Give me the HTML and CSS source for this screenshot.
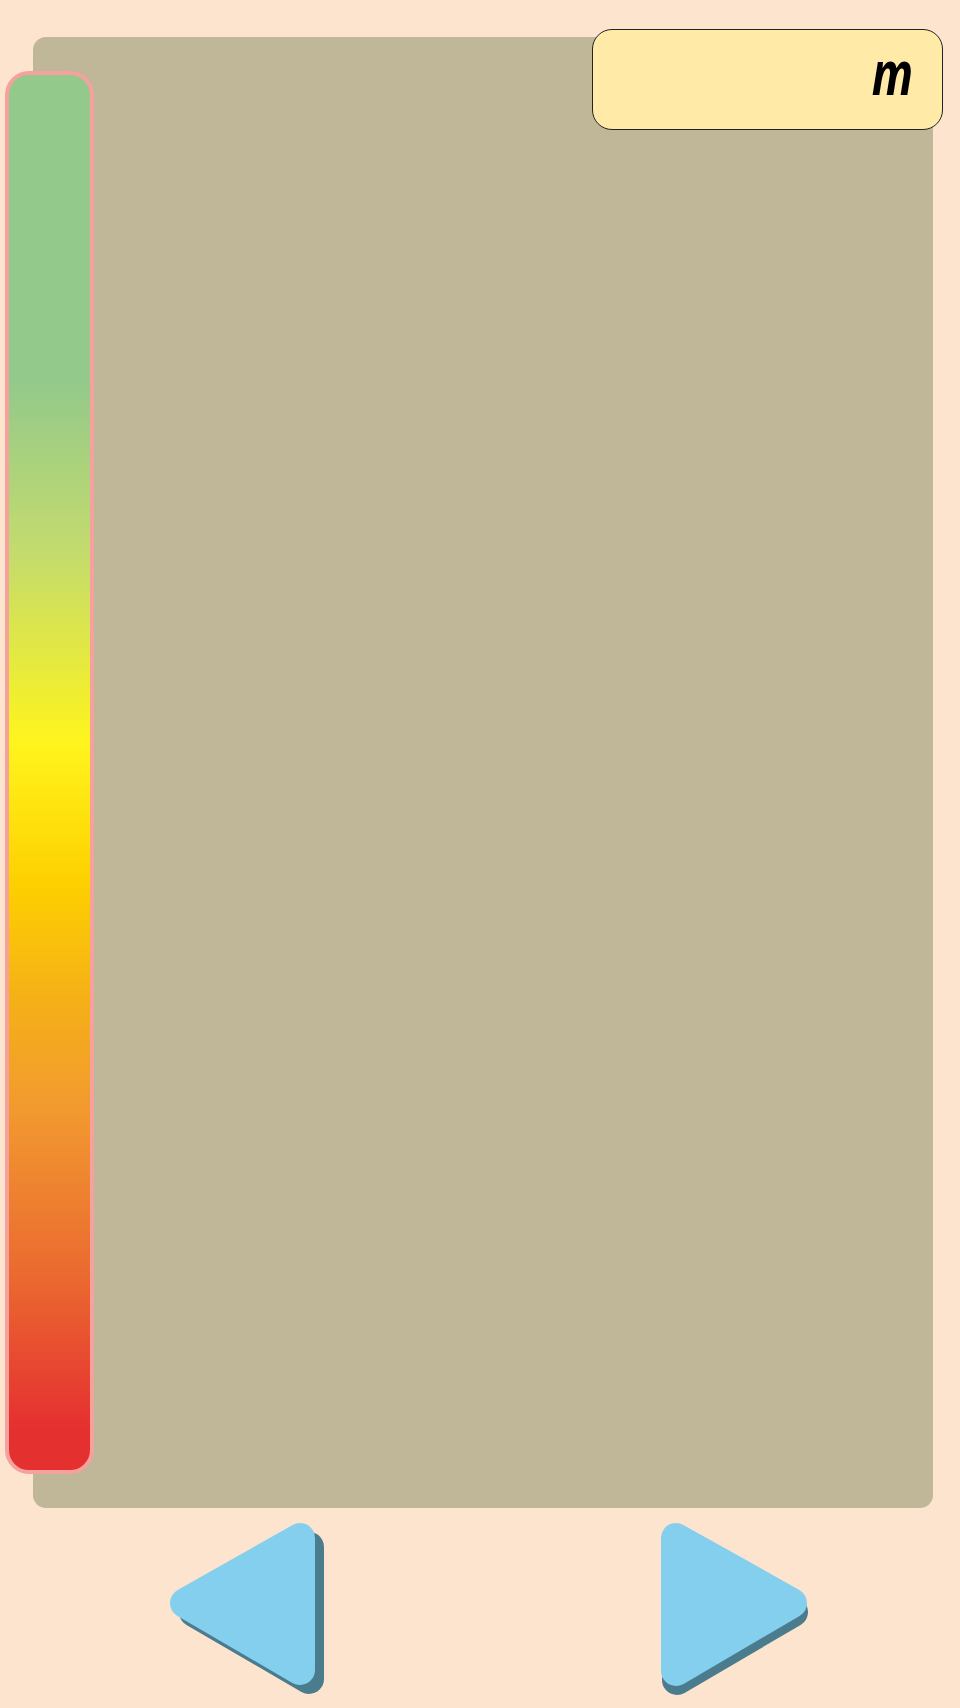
FILE: index.html
```html
<!DOCTYPE html>
<html lang="en">
<head>
    <meta charset="UTF-8">
    <meta name="viewport" content="width=device-width, initial-scale=1.0">
    <title>Gauge</title>
    <link rel="stylesheet" href="styles.css">
</head>
<body>
    <div class="stage">
        <div class="panel"></div>

        <div class="gauge"></div>

        <div class="readout">
            <span class="unit">m</span>
        </div>

        <div class="controls">
            <svg class="arrow" width="170" height="185" viewBox="0 0 170 185">
                <polygon class="arrow-shadow" points="34,97 149,32 149,164"/>
                <polygon class="arrow-face" points="25,88 140,23 140,155"/>
            </svg>
            <svg class="arrow" width="170" height="185" viewBox="0 0 170 185">
                <polygon class="arrow-shadow" points="27,32 27,165 143,97"/>
                <polygon class="arrow-face" points="26,23 26,156 142,88"/>
            </svg>
        </div>
    </div>
</body>
</html>
```

FILE: styles.css
```css
*{
    margin: 0;
    padding: 0;
    box-sizing: border-box;
}
body,html{
    background-color: #fce4cf;
    font-family: "Open Sans", "DejaVu Sans", sans-serif;
}
.stage{
    position: relative;
    width: 960px;
    height: 1708px;
    padding-top: 37px;
}
.panel{
    margin-left: 33px;
    width: 900px;
    height: 1471px;
    background-color: #c0b698;
    border-radius: 13px;
}
.gauge{
    position: absolute;
    left: 5px;
    top: 71px;
    width: 89px;
    height: 1403px;
    border: 4px solid #f5a19d;
    border-radius: 24px;
    background: linear-gradient(to bottom,
        #93c98a 0%,
        #93c98a 22%,
        #c3db6e 34%,
        #fff41c 48%,
        #fdd000 58%,
        #f5b117 66%,
        #f29a2f 74%,
        #ea6a30 86%,
        #e53030 97%,
        #e53030 100%);
}
.readout{
    position: absolute;
    left: 592px;
    top: 29px;
    width: 351px;
    height: 101px;
    border: 1px solid #222;
    border-radius: 20px;
    background-color: #ffeaa8;
    display: flex;
    align-items: center;
    justify-content: flex-end;
    padding-right: 29px;
}
.unit{
    display: inline-block;
    font-size: 61px;
    font-weight: 700;
    font-style: italic;
    color: #000;
    line-height: 1;
    margin-top: -17px;
    transform: scaleX(0.75);
    transform-origin: right center;
}
.controls{
    display: flex;
    gap: 320px;
    padding-left: 160px;
    margin-top: 7px;
}
.arrow polygon{
    stroke-width: 30px;
    stroke-linejoin: round;
}
.arrow-shadow{
    fill: #4a7c8e;
    stroke: #4a7c8e;
}
.arrow-face{
    fill: #84cfee;
    stroke: #84cfee;
}
```
